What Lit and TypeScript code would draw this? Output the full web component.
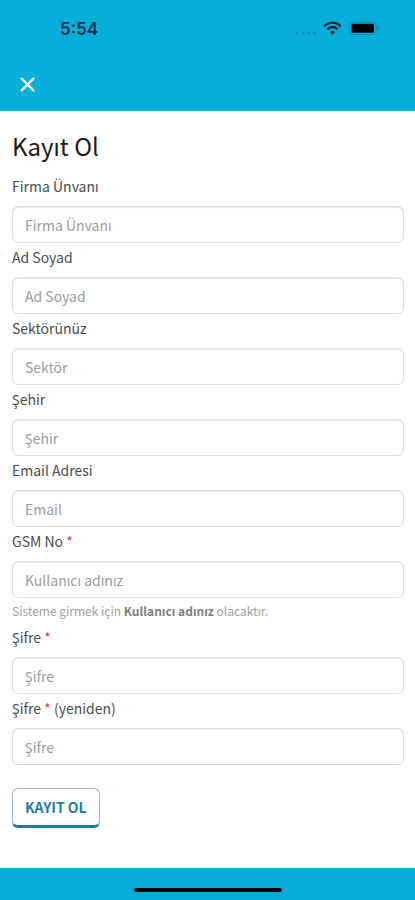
import { LitElement, html, css, nothing } from "lit";
import { customElement, property } from "lit/decorators.js";

@customElement("status-bar")
class StatusBar extends LitElement {
  static styles = css`
    :host {
      display: flex;
      align-items: center;
      justify-content: space-between;
      height: 58px;
      padding: 0 34px 0 60px;
      color: #06303f;
    }
    .time {
      font: 600 17px/24px Inter, sans-serif;
    }
    .icons {
      display: flex;
      align-items: center;
    }
  `;
  render() {
    return html`
      <span class="time">5:54</span>
      <span class="icons">
        <svg width="86" height="20" viewBox="0 0 86 20" aria-hidden="true">
          <g fill="#0787ab">
            <circle cx="2.3" cy="14.2" r="1.2" /><circle cx="8" cy="14.2" r="1.2" />
            <circle cx="13.7" cy="14.2" r="1.2" /><circle cx="19.4" cy="14.2" r="1.2" />
          </g>
          <g fill="none" stroke="#04222d" stroke-width="2.4">
            <path d="M29.3 7.3C34 2.4 41 2.4 45.7 7.3" />
            <path d="M32.4 10.4C35.6 7.2 39.4 7.2 42.6 10.4" />
          </g>
          <path d="M34.9 13C36.6 11.6 38.4 11.6 40.1 13L37.5 15.8Z" fill="#04222d" />
          <rect x="54.3" y="3" width="27" height="12.6" rx="4" fill="none" stroke="#078bb0" />
          <rect x="56.5" y="4.8" width="22.4" height="9" rx="1.6" fill="#000" />
          <path d="M83 7.3Q86 9.3 83 11.3Z" fill="#078bb0" />
        </svg>
      </span>
    `;
  }
}

@customElement("form-field")
class FormField extends LitElement {
  @property() label = "";
  @property() suffix = "";
  @property() placeholder = "";
  @property() type = "text";
  @property({ type: Boolean }) required = false;

  static styles = css`
    :host {
      display: block;
    }
    .label {
      display: block;
      padding: 2px 0 8px;
      font-size: 14px;
      line-height: 24px;
      color: #4c4c4c;
    }
    .star {
      color: #f0342c;
    }
    .input {
      display: block;
      box-sizing: border-box;
      width: 100%;
      height: 37px;
      padding: 0 12px;
      border: 1px solid #dcdddd;
      border-radius: 6px;
      background: #fff;
      box-shadow: inset 0 1px 1px #e6e7e7;
      color: #333;
      font: inherit;
      font-size: 14px;
      outline: none;
    }
    .input::placeholder {
      color: #9c9c9c;
      opacity: 1;
    }
    .input:focus {
      border-color: #07aedb;
    }
  `;
  render() {
    return html`
      <label class="label" for="field"
        >${this.label}${this.required ? html` <span class="star">*</span>` : nothing}
        ${this.suffix}</label
      >
      <input
        class="input"
        id="field"
        type=${this.type}
        placeholder=${this.placeholder}
        ?required=${this.required}
      />
      <slot></slot>
    `;
  }
}

@customElement("app-root")
class AppRoot extends LitElement {
  static styles = css`
    :host {
      display: flex;
      flex-direction: column;
      min-height: 100vh;
      background: #fff;
      font-family: "Noto Sans CJK SC", "Noto Sans", sans-serif;
    }
    .header {
      padding-bottom: 15px;
      background: #07aedb;
    }
    .close {
      display: block;
      margin: 14px 0 0 15px;
      padding: 0;
      border: 0;
      background: none;
      width: 24px;
      height: 24px;
    }
    .main {
      flex: 1;
      padding: 19px 11px 20px 12px;
    }
    .title {
      margin: 0;
      font-size: 24px;
      line-height: 32px;
      font-weight: 400;
      color: #1a1a1a;
    }
    .form {
      margin-top: 10px;
    }
    .hint {
      margin: 2px 0 1px;
      font-size: 12px;
      line-height: 22px;
      color: #a0a0a0;
    }
    .hint b {
      color: #808080;
    }
    .submit {
      display: block;
      margin-top: 23px;
      height: 40px;
      padding: 0 12px;
      border: 1px solid #8db9d2;
      border-bottom: 3px solid #1d7aa6;
      border-radius: 6px;
      background: #fff;
      color: #1f7ba8;
      font: 700 14px/34px "Noto Sans CJK SC", "Noto Sans", sans-serif;
    }
    .footer {
      display: flex;
      justify-content: center;
      height: 32px;
      background: #07aedb;
    }
    .handle {
      width: 148px;
      height: 4px;
      margin-top: 20px;
      border-radius: 2px;
      background: #000;
    }
  `;
  render() {
    return html`
      <header class="header">
        <status-bar></status-bar>
        <button class="close" type="button" aria-label="Kapat">
          <svg width="24" height="24" viewBox="0 0 24 24" aria-hidden="true">
            <path d="M6.6 6.6L18.4 18.4M18.4 6.6L6.6 18.4" stroke="#fff" stroke-width="2.3" stroke-linecap="round" />
          </svg>
        </button>
      </header>
      <main class="main">
        <h1 class="title">Kayıt Ol</h1>
        <form class="form" lang="tr">
          <form-field label="Firma Ünvanı" placeholder="Firma Ünvanı"></form-field>
          <form-field label="Ad Soyad" placeholder="Ad Soyad"></form-field>
          <form-field label="Sektörünüz" placeholder="Sektör"></form-field>
          <form-field label="Şehir" placeholder="Şehir"></form-field>
          <form-field label="Email Adresi" placeholder="Email" type="email"></form-field>
          <form-field label="GSM No" placeholder="Kullanıcı adınız" type="tel" required>
            <p class="hint">Sisteme girmek için <b>Kullanıcı adınız</b> olacaktır.</p>
          </form-field>
          <form-field label="Şifre" placeholder="Şifre" type="password" required></form-field>
          <form-field label="Şifre" suffix="(yeniden)" placeholder="Şifre" type="password" required></form-field>
          <button class="submit" type="button">KAYIT OL</button>
        </form>
      </main>
      <footer class="footer"><div class="handle"></div></footer>
    `;
  }
}
